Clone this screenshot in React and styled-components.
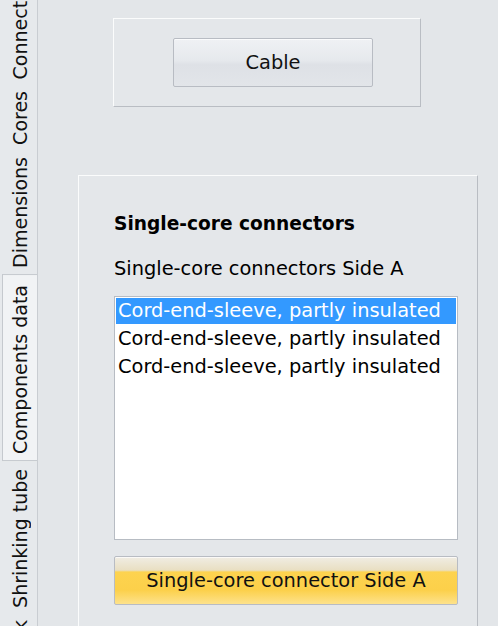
import React from 'react'
import styled, { createGlobalStyle } from 'styled-components'

const GlobalStyle = createGlobalStyle`
  html, body {
    margin: 0;
    padding: 0;
    background: #e3e6e9;
  }
  body {
    font-family: "DejaVu Sans", "Noto Sans", sans-serif;
    color: #000;
  }
`

const Window = styled.div`
  display: flex;
  width: 498px;
  height: 626px;
  overflow: hidden;
  background: #e3e6e9;
`

const TabStrip = styled.div`
  width: 37px;
  flex: none;
  border-right: 1px solid #c9cdd2;
  overflow: hidden;
  background: #e6e9ec;
`

const TabList = styled.div`
  display: flex;
  flex-direction: column;
  /* strip is scrolled, first tab is partly hidden */
  margin-top: -44px;
`

/* rotated 180deg: css padding-top shows at the bottom of the screen */
const Tab = styled.div`
  writing-mode: vertical-rl;
  transform: rotate(180deg);
  white-space: nowrap;
  font-size: 19px;
  line-height: 34px;
  width: 34px;
  padding: ${p => (p.$active ? '6px 0 10px' : '5px 0')};
  margin: ${p => (p.$active ? '0 -1px 2px 0' : '0')};
  margin-left: 2px;
  background: ${p => (p.$active ? '#f1f3f5' : 'transparent')};
  border: 1px solid ${p => (p.$active ? '#c5c9ce' : 'transparent')};
  border-left-color: ${p => (p.$active ? '#f1f3f5' : 'transparent')};
  color: #111;
`

const Content = styled.div`
  flex: 1;
  display: flex;
  flex-direction: column;
  padding: 18px 20px 0 40px;
`

const Panel = styled.div`
  background: #e4e7ea;
  border-top: 1px solid #fbfcfc;
  border-left: 1px solid #fbfcfc;
  border-right: 1px solid #b9bdc3;
  border-bottom: 1px solid #b9bdc3;
`

const TopPanel = styled(Panel)`
  align-self: flex-start;
  margin-left: 35px;
  height: 87px;
  width: 247px;
  display: flex;
  align-items: center;
  padding-left: 59px;
`

const Button = styled.button`
  font-family: "DejaVu Sans", "Noto Sans", sans-serif;
  font-size: 19.4px;
  color: #111;
  border: 1px solid #b8bcc3;
  border-radius: 2px;
  cursor: pointer;
  background: ${p =>
    p.$accent
      ? 'linear-gradient(#f0ede4 0%, #e9dfc2 28%, #fdd34f 32%, #fcd04a 70%, #fde28c 100%)'
      : 'linear-gradient(#eff1f4 0%, #e6e9ed 45%, #dee1e6 55%, #e2e5e9 100%)'};
  box-shadow: inset 0 1px 0 rgba(255, 255, 255, 0.7);
`

const CableButton = styled(Button)`
  width: 200px;
  height: 49px;
`

const MainPanel = styled(Panel)`
  margin-top: 68px;
  flex: 1;
  display: flex;
  flex-direction: column;
  padding: 36px 19px 0 35px;
  border-bottom: none;
`

const Title = styled.div`
  font-weight: bold;
  font-size: 18.6px;
  line-height: 24px;
`

const Label = styled.div`
  margin-top: 21px;
  font-size: 19.4px;
  line-height: 24px;
`

const ListBox = styled.div`
  margin-top: 15px;
  height: 240px;
  background: #fff;
  border: 1px solid #b7bcc3;
  padding: 1px;
  display: flex;
  flex-direction: column;
`

const Item = styled.div`
  font-size: 19.4px;
  line-height: 26px;
  height: 26px;
  padding-left: 2px;
  margin-bottom: 2px;
  white-space: nowrap;
  color: ${p => (p.$selected ? '#fff' : '#000')};
  background: ${p => (p.$selected ? '#3399ff' : 'transparent')};
`

const ConnectorButton = styled(Button)`
  margin-top: 16px;
  height: 49px;
  width: 100%;
`

const tabs = ['Connections', 'Cores', 'Dimensions', 'Components data', 'Shrinking tube', 'Check']
const items = [
  'Cord-end-sleeve, partly insulated',
  'Cord-end-sleeve, partly insulated',
  'Cord-end-sleeve, partly insulated',
]

export default function App() {
  return (
    <Window>
      <GlobalStyle />
      <TabStrip>
        <TabList>
          {tabs.map(t => (
            <Tab key={t} $active={t === 'Components data'}>
              {t}
            </Tab>
          ))}
        </TabList>
      </TabStrip>
      <Content>
        <TopPanel>
          <CableButton>Cable</CableButton>
        </TopPanel>
        <MainPanel>
          <Title>Single-core connectors</Title>
          <Label>Single-core connectors Side A</Label>
          <ListBox>
            {items.map((it, i) => (
              <Item key={i} $selected={i === 0}>
                {it}
              </Item>
            ))}
          </ListBox>
          <ConnectorButton $accent>Single-core connector Side A</ConnectorButton>
        </MainPanel>
      </Content>
    </Window>
  )
}
